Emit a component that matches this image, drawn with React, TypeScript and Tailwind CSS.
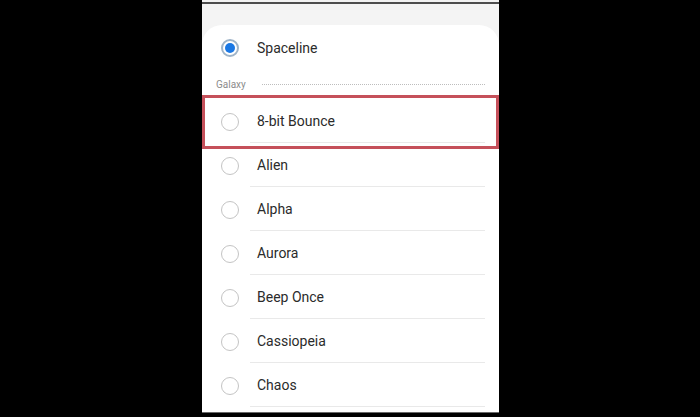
import React from "react";

const tones = ["8-bit Bounce", "Alien", "Alpha", "Aurora", "Beep Once", "Cassiopeia", "Chaos"];

function Radio({ checked }: { checked?: boolean }) {
  if (checked) {
    return (
      <div className="w-[18px] h-[18px] rounded-full border-2 border-[#9fb4c8] flex items-center justify-center shrink-0">
        <div className="w-[10px] h-[10px] rounded-full bg-[#1b78e4]" />
      </div>
    );
  }
  return <div className="w-[18px] h-[18px] rounded-full border-[1.5px] border-[#c4c4c4] shrink-0" />;
}

function ToneRow({ name, checked, divider = true }: { name: string; checked?: boolean; divider?: boolean }) {
  return (
    <div className="flex flex-col h-[44px]">
      <div className="flex flex-1 items-center pl-[19px] gap-[18px] pt-[2px]">
        <Radio checked={checked} />
        <span className="text-[14px] text-[#2b2b2b]">{name}</span>
      </div>
      {divider && <div className="h-px bg-[#e9e9e9] ml-[48px] mr-[14px]" />}
    </div>
  );
}

export default function App() {
  return (
    <div className="w-[700px] h-[417px] bg-black flex" style={{ fontFamily: "Roboto, 'Noto Sans', sans-serif" }}>
      <div className="ml-[202px] w-[297px] h-[413px] bg-[#f4f4f4] flex flex-col overflow-hidden border-b border-[#6a6a6a]">
        <div className="h-[2px] bg-[#f2f2f2]" />
        <div className="h-[2px] bg-[#4d4d4d]" />
        <div className="h-[21px]" />
        <div className="relative flex-1 bg-white rounded-t-[20px]">
          <ToneRow name="Spaceline" checked divider={false} />
          <div className="h-[30px] flex items-center pl-[14px] pr-[14px] gap-[16px]">
            <span className="text-[10px] text-[#8c8c8c]">Galaxy</span>
            <div className="flex-1 border-t border-dotted border-[#bdbdbd]" />
          </div>
          {tones.map((t) => (
            <ToneRow key={t} name={t} />
          ))}
          <div className="absolute left-0 right-0 top-[70px] h-[54px] border-[3px] border-[#c5505a]" />
        </div>
      </div>
    </div>
  );
}
